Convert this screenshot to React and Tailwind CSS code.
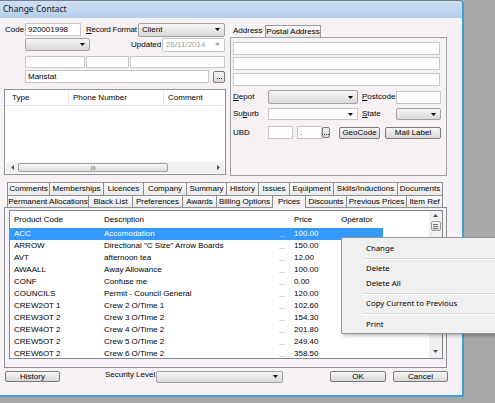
import React from 'react';

function Arrow({ gray }) {
  return (
    <svg width="5" height="3" viewBox="0 0 5 3" className="shrink-0">
      <path d="M0 0H5L2.5 3Z" fill={gray ? '#a0a0a0' : '#000'} />
    </svg>
  );
}

function Input({ cls = '', children }) {
  return (
    <div className={`border border-[#c6c6c6] bg-white flex items-center px-[2px] shrink-0 ${cls}`}>{children}</div>
  );
}

function Sel({ cls = '', children, white, gray }) {
  return (
    <div
      className={`flex items-center border rounded-[2px] pl-[3px] pr-[4px] shrink-0 ${
        white ? 'bg-white border-[#c6c6c6]' : 'border-[#a2a2a2] bg-linear-to-b from-[#f5f5f5] to-[#d9d9d9]'
      } ${cls}`}
    >
      <span className={`flex-1 ${gray ? 'text-[#a0a0a0]' : ''}`}>{children}</span>
      <Arrow gray={gray} />
    </div>
  );
}

function Btn({ cls = '', children }) {
  return (
    <div className={`flex items-center justify-center border border-[#7b7b7b] rounded-[2px] bg-linear-to-b from-[#f6f6f6] to-[#d8d8d8] shrink-0 ${cls}`}>
      {children}
    </div>
  );
}

function Dots() {
  return (
    <svg width="5" height="1" viewBox="0 0 5 1" className="mt-[4px]">
      <rect x="0" y="0" width="1" height="1" fill="#333" />
      <rect x="2" y="0" width="1" height="1" fill="#333" />
      <rect x="4" y="0" width="1" height="1" fill="#333" />
    </svg>
  );
}

const row1 = [
  ['Comments', 'w-[43px] border-l'],
  ['Memberships', 'w-[54px]'],
  ['Licences', 'w-[40px]'],
  ['Company', 'w-[43px]'],
  ['Summary', 'w-[40px]'],
  ['History', 'w-[32px]'],
  ['Issues', 'w-[31px]'],
  ['Equipment', 'w-[44px]'],
  ['Skills/Inductions', 'w-[64px]'],
  ['Documents', 'w-[45px]'],
];

const row2 = [
  ['Permanent Allocations', 'w-[82px] border-l'],
  ['Black List', 'w-[44px]'],
  ['Preferences', 'w-[50px]'],
  ['Awards', 'w-[34px]'],
  ['Billing Options', 'w-[56px]'],
  ['Prices', 'w-[33px]', true],
  ['Discounts', 'w-[41px]'],
  ['Previous Prices', 'w-[60px]'],
  ['Item Ref', 'w-[36px]'],
];

const products = [
  ['ACC', 'Accomodation', '100.00'],
  ['ARROW', 'Directional "C Size" Arrow Boards', '150.00'],
  ['AVT', 'afternoon tea', '12.00'],
  ['AWAALL', 'Away Allowance', '100.00'],
  ['CONF', 'Confuse me', '0.00'],
  ['COUNCILS', 'Permit - Council General', '120.00'],
  ['CREW2OT 1', 'Crew 2 O/Time 1', '102.60'],
  ['CREW3OT 2', 'Crew 3 O/Time 2', '154.30'],
  ['CREW4OT 2', 'Crew 4 O/Time 2', '201.80'],
  ['CREW5OT 2', 'Crew 5 O/Time 2', '249.40'],
  ['CREW6OT 2', 'Crew 6 O/Time 2', '358.50'],
];

export default function App() {
  return (
    <div className="w-[495px] h-[403px] bg-[#a9a7a9] relative overflow-hidden font-['Liberation_Sans',Arial,sans-serif] text-[8px] leading-none text-black">
      {/* Window */}
      <div className="w-[464px] h-[397px] bg-[#f5f1f5] border-t border-t-[#6f7e8e] border-r-2 border-b-2 border-r-[#3aa0d8] border-b-[#3aa0d8] rounded-tr-[5px] flex flex-col">
        {/* Title */}
        <div className="h-[17px] shrink-0 bg-linear-to-b from-[#cfe0f4] to-[#b3cdeb] rounded-tr-[4px] flex items-center pl-[3px] font-['Noto_Sans',sans-serif] text-[8.5px] text-[#1a1a1a]">
          Change Contact
        </div>

        {/* Top area */}
        <div className="h-[160px] shrink-0 flex">
          {/* Left column */}
          <div className="w-[230px] shrink-0 flex flex-col pt-[5px]">
            <div className="h-[13px] flex items-center">
              <span className="ml-[5px] w-[20px]">Code</span>
              <Input cls="w-[56px] h-[13px]">920001998</Input>
              <span className="ml-[5px] w-[52px] whitespace-nowrap tracking-[-0.2px]"><span className="underline">R</span>ecord Format</span>
              <Sel cls="w-[87px] h-[14px]">Client</Sel>
            </div>
            <div className="h-[13px] mt-[2px] flex items-center">
              <Sel cls="ml-[25px] w-[65px] h-[13px]"></Sel>
              <span className="ml-[41px] w-[31px]">Updated</span>
              <Sel white gray cls="w-[63px] h-[14px]">26/11/2014</Sel>
            </div>
            <div className="h-[12px] mt-[5px] flex">
              <Input cls="ml-[25px] w-[60px] h-[12px]" />
              <Input cls="ml-[1px] w-[43px] h-[12px]" />
              <Input cls="ml-[1px] w-[95px] h-[12px]" />
            </div>
            <div className="h-[13px] mt-[2px] flex items-center">
              <Input cls="ml-[25px] w-[184px] h-[13px]">Manstat</Input>
              <Btn cls="ml-[4px] w-[12px] h-[12px]"><Dots /></Btn>
            </div>
            {/* Phone list */}
            <div className="mt-[6px] ml-[4px] w-[222px] h-[86px] border border-[#8f939a] bg-white flex flex-col">
              <div className="h-[16px] flex items-center border-b border-[#e3e3e3] shrink-0">
                <span className="w-[64px] pl-[7px] border-r border-[#e6e6e6] h-full flex items-center">Type</span>
                <span className="w-[95px] pl-[4px] border-r border-[#e6e6e6] h-full flex items-center">Phone Number</span>
                <span className="flex-1 pl-[4px] h-full flex items-center">Comment</span>
              </div>
              <div className="flex-1" />
              <div className="h-[11px] mb-[1px] mx-[1px] bg-[#f0f0f0] flex items-center shrink-0">
                <span className="w-[12px] flex justify-center">
                  <svg width="3" height="5" viewBox="0 0 3 5"><path d="M3 0V5L0 2.5Z" fill="#555" /></svg>
                </span>
                <div className="w-[150px] h-[9px] border border-[#a0a0a0] rounded-[2px] bg-linear-to-b from-[#f7f7f7] to-[#dedede] flex items-center justify-center text-[6px] text-[#666]">
                  III
                </div>
                <div className="flex-1" />
                <span className="w-[12px] flex justify-center">
                  <svg width="3" height="5" viewBox="0 0 3 5"><path d="M0 0V5L3 2.5Z" fill="#555" /></svg>
                </span>
              </div>
            </div>
          </div>

          {/* Address panel */}
          <div className="w-[217px] shrink-0 flex flex-col pt-[6px]">
            <div className="h-[13px] flex items-end">
              <div className="w-[35px] h-[13px] flex items-center pl-[2px] bg-[#f5f1f5] border-t border-l border-white">Address</div>
              <div className="w-[56px] h-[12px] flex items-center justify-center border border-b-0 border-[#9a9a9a] bg-linear-to-b from-[#fbfbfb] to-[#e6e6e6]">Postal Address</div>
            </div>
            <div className="h-[139px] border border-[#a3a3a3] flex flex-col pl-[2px]">
              <Input cls="mt-[4px] w-[207px] h-[13px]" />
              <Input cls="mt-[2px] w-[207px] h-[13px]" />
              <Input cls="mt-[3px] w-[207px] h-[13px]" />
              <div className="mt-[4px] h-[14px] flex items-center">
                <span className="w-[35px]"><span className="underline">D</span>epot</span>
                <Sel cls="w-[90px] h-[14px]"></Sel>
                <span className="ml-[4px] w-[34px]"><span className="underline">P</span>ostcode</span>
                <Input cls="w-[45px] h-[13px]" />
              </div>
              <div className="mt-[4px] h-[12px] flex items-center">
                <span className="w-[35px]">Su<span className="underline">b</span>urb</span>
                <Sel white cls="w-[90px] h-[12px] rounded-none"></Sel>
                <span className="ml-[4px] w-[34px]"><span className="underline">S</span>tate</span>
                <Sel cls="w-[45px] h-[12px]"></Sel>
              </div>
              <div className="mt-[6px] h-[13px] flex items-center">
                <span className="w-[35px]">UBD</span>
                <Input cls="w-[25px] h-[13px]" />
                <Input cls="ml-[4px] w-[25px] h-[13px] text-[#555]">:</Input>
                <Btn cls="w-[8px] h-[11px]"><Dots /></Btn>
                <Btn cls="ml-[9px] w-[41px] h-[12px]">GeoCode</Btn>
                <Btn cls="ml-[5px] w-[56px] h-[12px]">Mail Label</Btn>
              </div>
            </div>
          </div>
        </div>

        {/* Tabs */}
        <div className="mt-[4px] ml-[7px] flex flex-col shrink-0">
          <div className="h-[13px] flex">
            {row1.map(([t, w]) => (
              <div key={t} className={`${w} h-[13px] border-t border-r border-[#8d8f94] bg-linear-to-b from-[#fcfcfc] to-[#e9e9e9] flex items-center justify-center whitespace-nowrap`}>
                {t}
              </div>
            ))}
          </div>
          <div className="h-[12px] flex items-end relative z-10">
            {row2.map(([t, w, active]) => (
              <div
                key={t}
                className={`${w} border-t border-r border-[#8d8f94] flex items-center justify-center whitespace-nowrap ${
                  active ? 'h-[13px] bg-[#f5f1f5] -mb-[1px] pb-[1px]' : 'h-[12px] bg-linear-to-b from-[#fcfcfc] to-[#e9e9e9]'
                }`}
              >
                {t}
              </div>
            ))}
          </div>
        </div>
        <div className="ml-[4px] w-[443px] h-[161px] border border-[#8d8f94] shrink-0 pt-[2px] pl-[4px]">
          <div className="w-[434px] h-[149px] border border-[#828790] bg-white flex">
            <div className="flex-1 flex flex-col overflow-hidden">
              <div className="h-[17px] flex items-center shrink-0">
                <span className="w-[94px] pl-[4px]">Product Code</span>
                <span className="w-[175px]">Description</span>
                <span className="w-[15px]"></span>
                <span className="w-[47px]">Price</span>
                <span className="w-[40px]">Operator</span>
              </div>
              {products.map(([c, d, p], i) => (
                <div key={c} className="h-[12px] flex items-center shrink-0">
                  <div className={`w-[373px] h-full flex items-center ${i === 0 ? 'bg-[#3399ff] text-white' : ''}`}>
                    <span className="w-[94px] pl-[4px]">{c}</span>
                    <span className="w-[175px] whitespace-nowrap">{d}</span>
                    <span className={`w-[15px] text-[7px] ${i === 0 ? 'text-white' : 'text-[#777]'}`}>...</span>
                    <span className="w-[47px]">{p}</span>
                  </div>
                </div>
              ))}
            </div>
            {/* Vertical scrollbar */}
            <div className="w-[13px] h-full bg-[#f0f0f0] flex flex-col items-center pt-[3px] shrink-0">
              <svg width="5" height="3" viewBox="0 0 5 3"><path d="M0 3H5L2.5 0Z" fill="#555" /></svg>
              <div className="mt-[4px] w-[10px] h-[10px] border border-[#9a9a9a] rounded-[2px] bg-linear-to-b from-[#f8f8f8] to-[#dedede] flex flex-col items-center justify-center gap-[1px]">
                <div className="w-[5px] h-px bg-[#777]" />
                <div className="w-[5px] h-px bg-[#777]" />
                <div className="w-[5px] h-px bg-[#777]" />
              </div>
              <div className="flex-1" />
              <svg width="5" height="3" viewBox="0 0 5 3" className="mb-[5px]"><path d="M0 0H5L2.5 3Z" fill="#555" /></svg>
            </div>
          </div>
        </div>

        {/* Bottom row */}
        <div className="mt-[2px] h-[13px] flex items-center shrink-0">
          <Btn cls="ml-[5px] w-[55px] h-[11px]">History</Btn>
          <span className="ml-[45px] w-[51px] -mt-[3px] whitespace-nowrap">Security Level</span>
          <Sel cls="w-[127px] h-[12px]"></Sel>
          <Btn cls="ml-[47px] w-[56px] h-[11px]">OK</Btn>
          <Btn cls="ml-[7px] w-[55px] h-[11px]">Cancel</Btn>
        </div>
      </div>

      {/* Context menu */}
      <div className="absolute left-[341px] top-[237px] w-[170px] h-[97px] bg-[#f0f0f0] border border-[#979797] shadow-[2px_2px_3px_rgba(0,0,0,0.25)] flex flex-col pt-[2px] font-['Noto_Sans',sans-serif] text-[7.8px]">
        <div className="h-[17px] flex items-center pl-[24px]">Change</div>
        <div className="h-[5px] flex flex-col justify-center pl-[21px]"><div className="h-px bg-[#d7d7d7]" /><div className="h-px bg-white" /></div>
        <div className="h-[15px] flex items-center pl-[24px]">Delete</div>
        <div className="h-[15px] flex items-center pl-[24px]">Delete All</div>
        <div className="h-[5px] flex flex-col justify-center pl-[21px]"><div className="h-px bg-[#d7d7d7]" /><div className="h-px bg-white" /></div>
        <div className="h-[16px] flex items-center pl-[24px]">Copy Current to Previous</div>
        <div className="h-[4px] flex flex-col justify-center pl-[21px]"><div className="h-px bg-[#d7d7d7]" /><div className="h-px bg-white" /></div>
        <div className="h-[17px] flex items-center pl-[24px]">Print</div>
      </div>
    </div>
  );
}
